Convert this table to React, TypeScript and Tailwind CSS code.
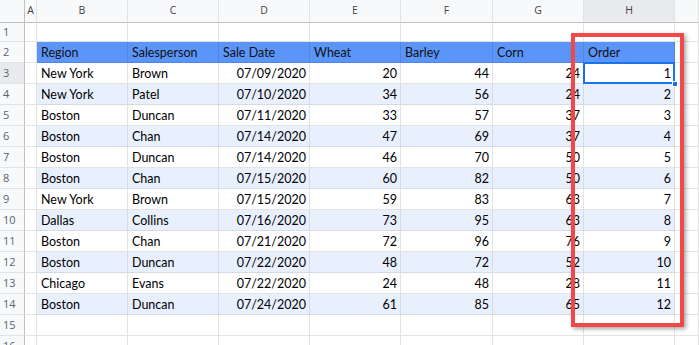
import React from "react";

const data: (string | number)[][] = [
  ["New York", "Brown", "07/09/2020", 20, 44, 24, 1],
  ["New York", "Patel", "07/10/2020", 34, 56, 24, 2],
  ["Boston", "Duncan", "07/11/2020", 33, 57, 37, 3],
  ["Boston", "Chan", "07/14/2020", 47, 69, 37, 4],
  ["Boston", "Duncan", "07/14/2020", 46, 70, 50, 5],
  ["Boston", "Chan", "07/15/2020", 60, 82, 50, 6],
  ["New York", "Brown", "07/15/2020", 59, 83, 63, 7],
  ["Dallas", "Collins", "07/16/2020", 73, 95, 63, 8],
  ["Boston", "Chan", "07/21/2020", 72, 96, 76, 9],
  ["Boston", "Duncan", "07/22/2020", 48, 72, 52, 10],
  ["Chicago", "Evans", "07/22/2020", 24, 48, 28, 11],
  ["Boston", "Duncan", "07/24/2020", 61, 85, 65, 12],
];

const headers = ["Region", "Salesperson", "Sale Date", "Wheat", "Barley", "Corn", "Order"];
const letters = ["A", "B", "C", "D", "E", "F", "G", "H", ""];

const gridCols = "grid grid-cols-[25px_12px_91px_91px_91px_91px_92px_91px_91px_1fr]";
const uiFont = { fontFamily: '"Open Sans", "Noto Sans", sans-serif' };

function RowHead({ n, selected, h }: { n: number; selected?: boolean; h: string }) {
  return (
    <div
      style={uiFont}
      className={`${h} flex items-center pl-[3px] text-[11px] text-[#5f6368] border-r border-r-[#c0c0c0] border-b border-b-[#e2e3e3] ${
        selected ? "bg-[#e8eaed]" : "bg-[#f8f9fa]"
      }`}
    >
      {n}
    </div>
  );
}

export default function App() {
  const font = { fontFamily: 'Lato, "Open Sans", sans-serif' };
  return (
    <div className="relative w-[699px] h-[345px] overflow-hidden bg-white text-black" style={font}>
      {/* column headers */}
      <div className={`${gridCols} h-[23px]`} style={uiFont}>
        <div className="bg-[#f8f9fa] border-r border-r-[#c0c0c0] border-b border-b-[#c0c0c0]" />
        {letters.map((l, i) => (
          <div
            key={i}
            className={`flex items-center justify-center text-[10.5px] text-[#444] border-r border-r-[#e2e3e3] border-b border-b-[#c0c0c0] ${
              l === "H" ? "bg-[#e8eaed]" : "bg-[#f8f9fa]"
            }`}
          >
            {l}
          </div>
        ))}
      </div>
      {/* row 1 */}
      <div className={`${gridCols} h-[19px]`}>
        <RowHead n={1} h="h-[19px]" />
        {letters.map((_, i) => (
          <div key={i} className="border-r border-b border-[#e2e3e3]" />
        ))}
      </div>
      {/* row 2 header */}
      <div className={`${gridCols} h-[21px]`}>
        <RowHead n={2} h="h-[21px]" />
        <div className="border-r border-b border-[#e2e3e3]" />
        {headers.map((t, i) => (
          <div
            key={i}
            className="flex items-end pb-[2px] pl-[4px] text-[12.5px] leading-[15px] bg-[#5b95f9] text-[#111] border-r border-b border-[#4f86e6]"
          >
            {t}
          </div>
        ))}
        <div className="border-r border-b border-[#e2e3e3]" />
      </div>
      {/* data rows */}
      {data.map((row, r) => {
        const blue = r % 2 === 1;
        const rowNum = r + 3;
        return (
          <div key={r} className={`${gridCols} h-[21px]`}>
            <RowHead n={rowNum} h="h-[21px]" selected={rowNum === 3} />
            <div className="border-r border-b border-[#e2e3e3]" />
            {row.map((v, c) => {
              const right = c >= 2;
              const isSel = rowNum === 3 && c === 6;
              return (
                <div
                  key={c}
                  className={`relative flex items-end pb-[2px] text-[12.5px] leading-[15px] border-r border-b ${
                    blue ? "bg-[#e8f0fe] border-[#d6dbe3]" : "bg-white border-[#e2e3e3]"
                  } ${right ? "justify-end pr-[3px]" : "pl-[4px]"}`}
                >
                  {v}
                  {isSel && (
                    <>
                      <div className="absolute -left-px -top-px right-[-1px] bottom-[-1px] border-2 border-[#1a73e8]" />
                      <div className="absolute right-[-4px] bottom-[-4px] w-[6px] h-[6px] bg-[#1a73e8] border border-white z-10" />
                    </>
                  )}
                </div>
              );
            })}
            <div className="border-r border-b border-[#e2e3e3]" />
          </div>
        );
      })}
      {/* rows 15, 16 */}
      {[15, 16].map((n) => (
        <div key={n} className={`${gridCols} h-[21px]`}>
          <RowHead n={n} h="h-[21px]" />
          {letters.map((_, i) => (
            <div key={i} className="border-r border-b border-[#e2e3e3]" />
          ))}
        </div>
      ))}
      {/* red highlight box */}
      <div className="absolute left-[571px] top-[33px] w-[113px] h-[294px] border-4 border-[#f24848] shadow-[2px_2px_4px_rgba(0,0,0,0.35)] pointer-events-none" />
    </div>
  );
}
